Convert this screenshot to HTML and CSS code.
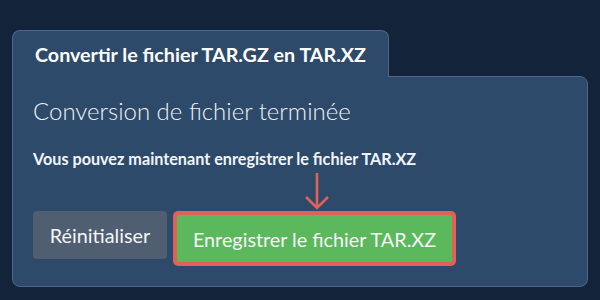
FILE: index.html
```html
<!DOCTYPE html>
<html lang="fr">
<head>
  <meta charset="UTF-8" />
  <title>Convertir le fichier TAR.GZ en TAR.XZ</title>
  <link rel="stylesheet" href="styles.css">
</head>
<body>

  <div class="converter">
    <!-- Tab header -->
    <div class="tabs">
      <div class="tab">Convertir le fichier TAR.GZ en TAR.XZ</div>
    </div>

    <!-- Result panel -->
    <div class="panel">
      <h2>Conversion de fichier terminée</h2>
      <p class="info">Vous pouvez maintenant enregistrer le fichier TAR.XZ</p>
      <div class="actions">
        <button class="btn-reset">Réinitialiser</button>
        <button class="btn-save">
          Enregistrer le fichier TAR.XZ
          <svg class="hint-arrow" width="28" height="40" viewBox="0 0 28 40">
            <path d="M14 1 V36 M3 25 L14 36 L25 25" fill="none" stroke="#e0605a" stroke-width="2.6" />
          </svg>
        </button>
      </div>
    </div>
  </div>

</body>
</html>
```

FILE: styles.css
```css
body {
  font-family: Lato, "Open Sans", sans-serif;
  margin: 0;
  background-color: #12233a;
  color: #f2f5f8;
}
.converter {
  padding: 30px 12px 13px 12px;
}
.tabs {
  display: flex;
}
.tab {
  position: relative;
  z-index: 1;
  background: #2d4a6a;
  border: 1px solid #4d6788;
  border-bottom: none;
  border-radius: 8px 8px 0 0;
  margin-bottom: -1px;
  height: 46px;
  padding: 0 22px;
  display: flex;
  align-items: center;
  font-size: 19.7px;
  font-weight: bold;
  color: #ffffff;
}
.panel {
  background: #2d4a6a;
  border: 1px solid #4d6788;
  border-radius: 0 8px 8px 8px;
  padding: 18px 20px 20px 20px;
}
.panel h2 {
  margin: 0;
  font-size: 24px;
  font-weight: 300;
  line-height: 32px;
  color: #eef2f6;
}
.info {
  margin: 22px 0 42px 0;
  font-size: 16.2px;
  font-weight: bold;
  line-height: 20px;
}
.actions {
  display: flex;
  align-items: flex-start;
  gap: 6px;
}
button {
  font-family: Lato, "Open Sans", sans-serif;
  font-size: 19.8px;
  color: #f4f6f8;
  border: none;
  border-radius: 4px;
  cursor: pointer;
}
.btn-reset {
  background: #4f5f71;
  width: 134px;
  height: 48px;
  padding: 0;
}
.btn-save {
  position: relative;
  background: #5cb85c;
  border: 4px solid #e0605a;
  border-radius: 5px;
  width: 283px;
  height: 55px;
  padding: 0;
}
.hint-arrow {
  position: absolute;
  left: 50%;
  top: -43px;
  margin-left: -12px;
}
```
